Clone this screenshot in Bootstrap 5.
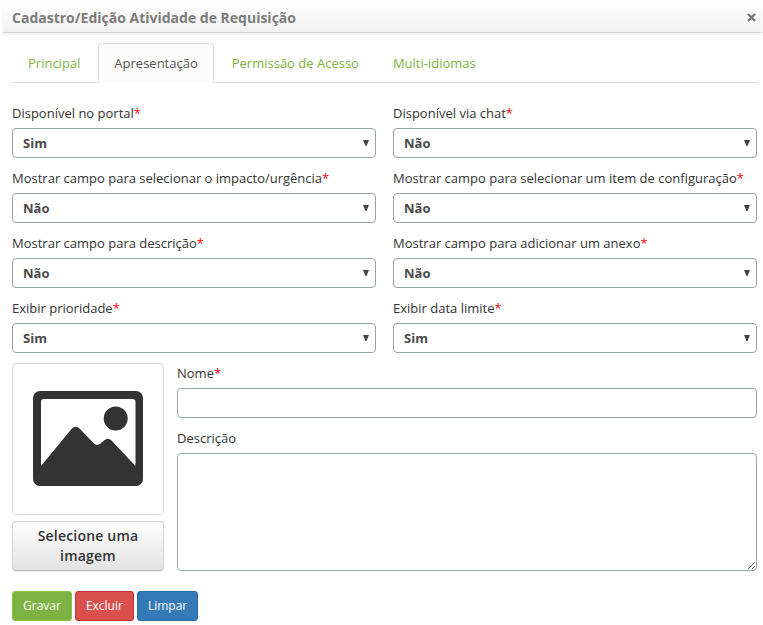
<!DOCTYPE html>
<html lang="pt-BR">
<head>
<meta charset="utf-8">
<meta name="viewport" content="width=device-width, initial-scale=1">
<title>Cadastro/Edição Atividade de Requisição</title>
<link href="https://cdn.jsdelivr.net/npm/bootstrap@5.3.0/dist/css/bootstrap.min.css" rel="stylesheet">
<style>
body{font-family:"Open Sans","Noto Sans",sans-serif;font-size:13px;line-height:20px;color:#333;background:#fff;overflow:hidden}
.dialog-head{margin:5px 1px 0 3px;height:28px;padding:0 5px 2px 9px;background:linear-gradient(#fdfdfd,#f1f1f1);border-bottom:1px solid #d4d4d4;box-shadow:0 2px 3px rgba(0,0,0,.07);color:#7c7c7c}
.dialog-head h1{font-size:14px;font-weight:700;line-height:20px}
.close-btn{width:12px;height:20px;color:#777}
.dialog-body{padding:10px 6px 0 12px}
.nav-tabs{--bs-nav-tabs-border-color:#ddd;height:40px;margin-bottom:20px}
.nav-tabs .nav-item{margin-right:2px}
.nav-tabs .nav-link{height:40px;padding:9px 15px;line-height:20px;color:#7cb342;border-radius:4px 4px 0 0}
.nav-tabs .nav-link.active{color:#555;background:#fcfcfc;border-color:#ddd #ddd #fcfcfc}
.fields{display:grid;grid-template-columns:364px 364px;column-gap:17px;row-gap:10px}
.form-label{display:block;margin-bottom:5px;line-height:20px}
.req{color:#f00}
.form-select,.form-control{border:1px solid #95a5a0;border-radius:4px;font-size:13px;color:#4a4a4a}
.form-select{height:30px;padding:4px 24px 4px 10px;font-weight:700;line-height:20px;background:#fff url("data:image/svg+xml,%3Csvg xmlns='http://www.w3.org/2000/svg' width='6' height='6'%3E%3Cpath d='M0 0h6L3.5 6h-1z' fill='%23444'/%3E%3C/svg%3E") no-repeat right 6px top 11px/6px 6px}
.form-control{height:30px;padding:4px 10px}
input.form-control{margin-bottom:10px}
textarea.form-control{height:118px;resize:vertical}
.lower{margin-top:10px;gap:13px}
.pic-col{width:152px}
.pic-box{height:152px;padding-bottom:1px;border:1px solid #d4d4d4;border-radius:5px}
.pic-btn{height:50px;margin-top:6px;padding:4px 20px;font-size:14px;font-weight:600;line-height:20px;letter-spacing:.2px;color:#333;background:linear-gradient(#fff,#e2e2e2);border:1px solid #d4d4d4;border-bottom-color:#b8b8b8;border-radius:4px;box-shadow:0 1px 2px rgba(0,0,0,.06)}
.actions{margin-top:20px;gap:3px}
.actions .btn{height:30px;padding:4px 10px;font-size:12px;line-height:20px;border-radius:3px;color:#fff}
.act-save{background:#7cb342;border-color:#8bc34a}
.act-del{background:#d9504c;border-color:#c23531}
.act-clear{background:#337ab7;border-color:#2e6da4}
</style>
<script src="https://cdn.jsdelivr.net/npm/bootstrap@5.3.0/dist/js/bootstrap.bundle.min.js"></script>
</head>
<body>
<header class="dialog-head d-flex align-items-center justify-content-between">
  <h1 class="m-0">Cadastro/Edição Atividade de Requisição</h1>
  <button type="button" class="close-btn border-0 bg-transparent p-0 d-flex align-items-center justify-content-center" aria-label="Fechar">
    <svg width="9" height="9" viewBox="0 0 9 9"><path d="M1 1l7 7M8 1L1 8" stroke="currentColor" stroke-width="2.4"/></svg>
  </button>
</header>
<main class="dialog-body">
  <ul class="nav nav-tabs">
    <li class="nav-item"><a class="nav-link" href="#">Principal</a></li>
    <li class="nav-item"><a class="nav-link active" href="#">Apresentação</a></li>
    <li class="nav-item"><a class="nav-link" href="#">Permissão de Acesso</a></li>
    <li class="nav-item"><a class="nav-link" href="#">Multi-idiomas</a></li>
  </ul>
  <form>
    <div class="fields">
      <div><label class="form-label" for="f1">Disponível no portal<span class="req">*</span></label><select id="f1" class="form-select"><option>Sim</option><option>Não</option></select></div>
      <div><label class="form-label" for="f2">Disponível via chat<span class="req">*</span></label><select id="f2" class="form-select"><option>Não</option><option>Sim</option></select></div>
      <div><label class="form-label" for="f3">Mostrar campo para selecionar o impacto/urgência<span class="req">*</span></label><select id="f3" class="form-select"><option>Não</option><option>Sim</option></select></div>
      <div><label class="form-label" for="f4">Mostrar campo para selecionar um item de configuração<span class="req">*</span></label><select id="f4" class="form-select"><option>Não</option><option>Sim</option></select></div>
      <div><label class="form-label" for="f5">Mostrar campo para descrição<span class="req">*</span></label><select id="f5" class="form-select"><option>Não</option><option>Sim</option></select></div>
      <div><label class="form-label" for="f6">Mostrar campo para adicionar um anexo<span class="req">*</span></label><select id="f6" class="form-select"><option>Não</option><option>Sim</option></select></div>
      <div><label class="form-label" for="f7">Exibir prioridade<span class="req">*</span></label><select id="f7" class="form-select"><option>Sim</option><option>Não</option></select></div>
      <div><label class="form-label" for="f8">Exibir data limite<span class="req">*</span></label><select id="f8" class="form-select"><option>Sim</option><option>Não</option></select></div>
    </div>
    <div class="lower d-flex">
      <div class="pic-col flex-shrink-0">
        <div class="pic-box d-flex align-items-center justify-content-center">
          <svg width="110" height="95" viewBox="0 0 110 95">
            <rect width="110" height="95" rx="7" fill="#333"/>
            <path d="M8 75V11q0-3 3-3H99.500q3 0 3 3V75L78.500 49.500Q75 46 71 49.500L67.500 52.500Q64 55.500 60.500 52L47 38Q43 33.500 38.500 38Z" fill="#fff"/>
            <circle cx="82.700" cy="27.500" r="12" fill="#333"/>
          </svg>
        </div>
        <button type="button" class="pic-btn btn w-100 d-block">Selecione uma imagem</button>
      </div>
      <div class="flex-grow-1">
        <label class="form-label" for="nome">Nome<span class="req">*</span></label>
        <input id="nome" type="text" class="form-control">
        <label class="form-label" for="desc">Descrição</label>
        <textarea id="desc" class="form-control"></textarea>
      </div>
    </div>
    <div class="actions d-flex">
      <button type="button" class="btn act-save">Gravar</button>
      <button type="button" class="btn act-del">Excluir</button>
      <button type="button" class="btn act-clear">Limpar</button>
    </div>
  </form>
</main>
</body>
</html>
